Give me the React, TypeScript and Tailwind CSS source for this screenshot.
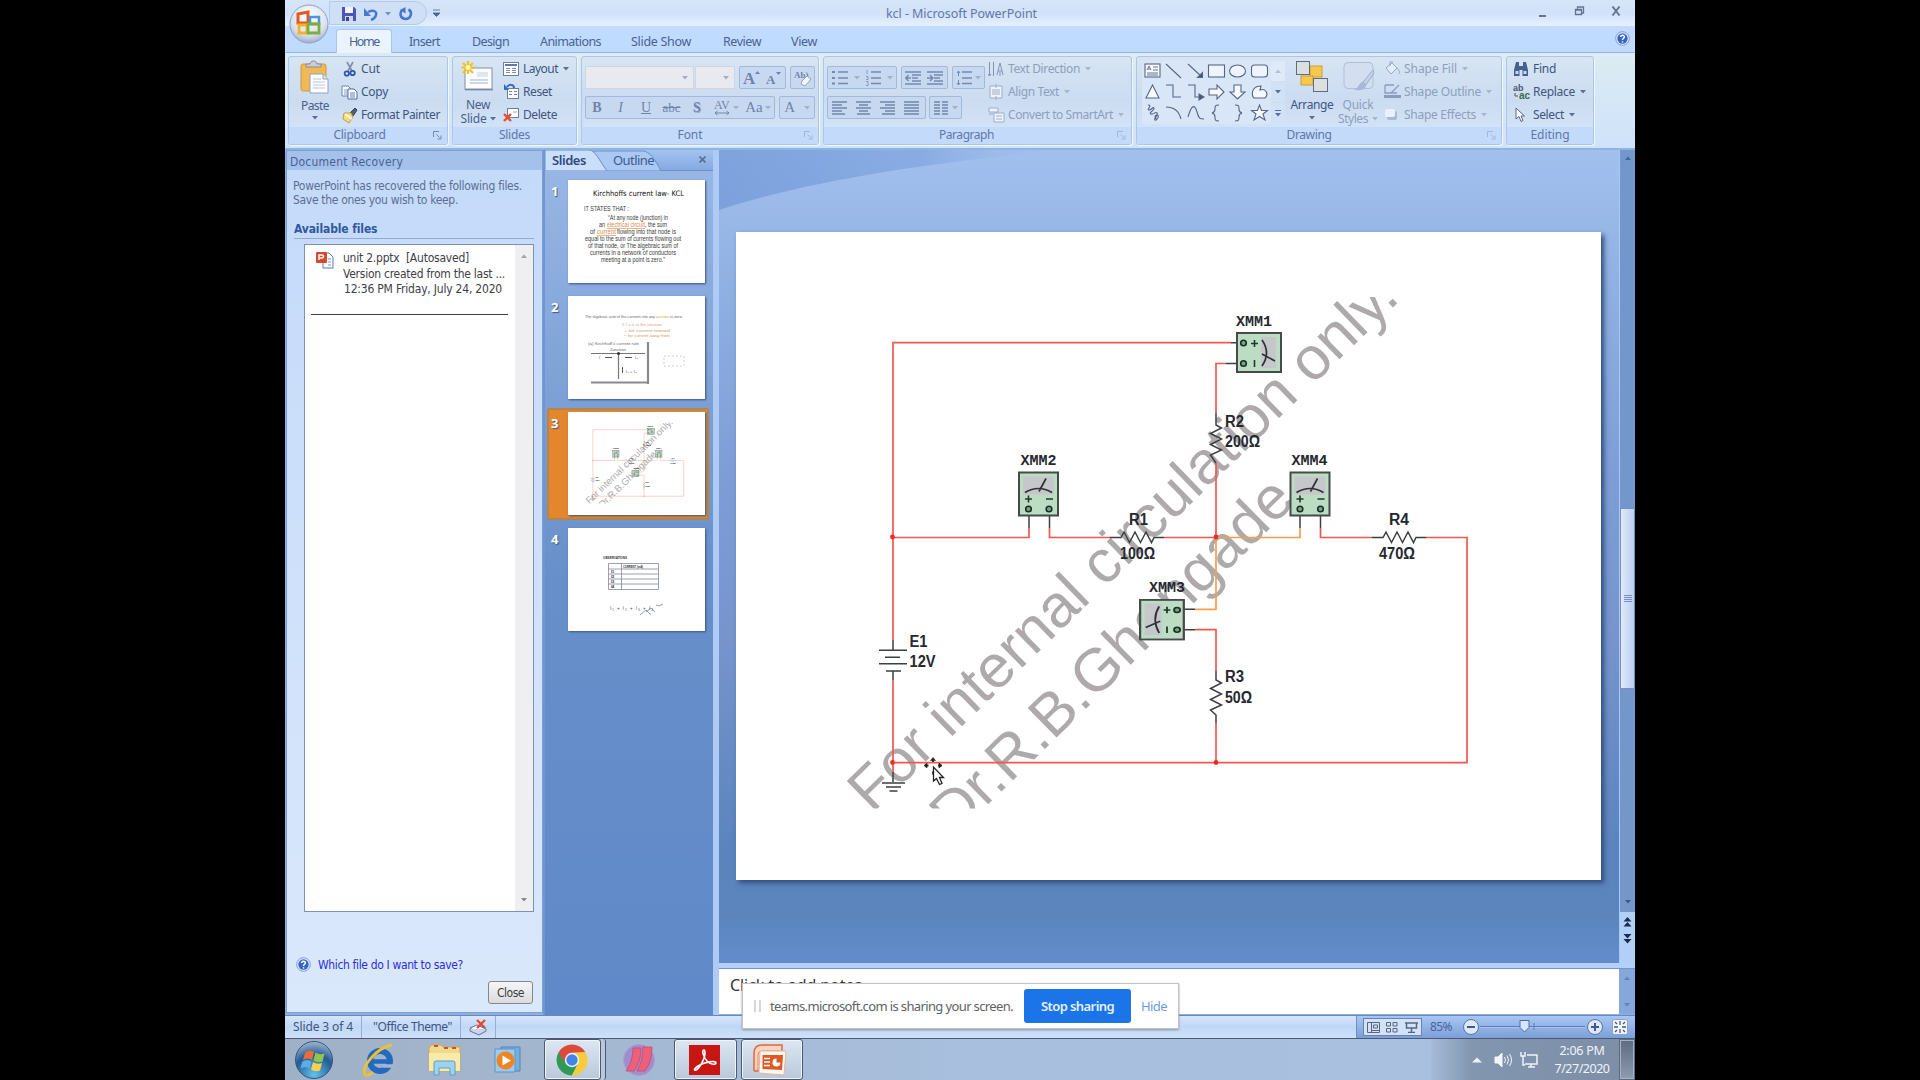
import React, { useLayoutEffect, useRef } from "react";

const UI = "font-['Noto_Sans','Open_Sans',sans-serif]";
const TAHOMA = "font-['DejaVu_Sans_Condensed','DejaVu_Sans',sans-serif]";

/** Single-line label whose tracking is computed so that it fills a given width. */
function Label({ w, className = "", children }: { w: number; className?: string; children: string }) {
  const ref = useRef<HTMLSpanElement>(null);
  useLayoutEffect(() => {
    const el = ref.current;
    if (!el) return;
    el.style.letterSpacing = "0px";
    const natural = el.getBoundingClientRect().width;
    el.style.letterSpacing = `${(w - natural) / children.length}px`;
  }, [w, children]);
  return (
    <span ref={ref} className={`inline-block w-fit shrink-0 whitespace-pre leading-[14px] ${className}`}>
      {children}
    </span>
  );
}

function Caret({ className = "text-[#5a6f96]" }: { className?: string }) {
  return (
    <svg width="6" height="4" viewBox="0 0 6 4" className={`shrink-0 ${className}`}>
      <path d="M0 0h6L3 3.6z" fill="currentColor" />
    </svg>
  );
}

function Launcher({ faded = false }: { faded?: boolean }) {
  return (
    <svg width="9" height="9" viewBox="0 0 9 9" className={faded ? "text-[#a3b6d3]" : "text-[#7488ad]"} fill="none" stroke="currentColor">
      <path d="M.5 6V.5H6M3.5 3.5l3 3M8 4.5V8H4.5" />
    </svg>
  );
}

function Group({ width, label, labelW, pad = "pr-0", launcher, faded, children }: { width: string; label: string; labelW: number; pad?: string; launcher?: boolean; faded?: boolean; children: React.ReactNode }) {
  return (
    <section className={`${width} flex h-[89px] shrink-0 flex-col overflow-hidden rounded-[3px] border border-[#adc5e6] bg-gradient-to-b from-[#d7e5f3] via-[#cbdcf1] to-[#d6e7fb] shadow-[1px_1px_0_#eef6ff]`}>
      <div className="flex h-[70px] shrink-0">{children}</div>
      <div className="relative flex h-[17px] items-center justify-center bg-[#c3dafb]">
        <div className={`flex pb-[2px] ${pad}`}>
          <Label w={labelW} className="text-[12px] text-[#5f78a8]">{label}</Label>
        </div>
        {launcher && (
          <div className="absolute right-[5px] top-[4px]">
            <Launcher faded={faded} />
          </div>
        )}
      </div>
    </section>
  );
}

function Row({ icon, text, w, caret, off }: { icon: React.ReactNode; text: string; w: number; caret?: boolean; off?: boolean }) {
  return (
    <div className="flex h-[23px] items-center">
      <div className="flex w-[20px] shrink-0 items-center">{icon}</div>
      <Label w={w} className={off ? "text-[12px] text-[#8c9fbd]" : "text-[12px] text-[#40557f]"}>{text}</Label>
      {caret && <div className="ml-[5px]"><Caret className={off ? "text-[#a5b6d0]" : "text-[#5a6f96]"} /></div>}
    </div>
  );
}

/* ---------- ribbon icons ---------- */
const PasteIcon = () => (
  <svg width="30" height="34" viewBox="0 0 30 34">
    <rect x="1" y="4" width="25" height="27" rx="2" fill="#efba55" stroke="#cf9a3f" />
    <path d="M6 7V4h4c0-4 7-4 7 0h4v3z" fill="#c9ced6" stroke="#858c98" />
    <path d="M10 14h13l5 5v14H10z" fill="#fff" stroke="#8ea0c4" />
    <path d="M13 19h8M13 22h12M13 25h12M13 28h12" stroke="#b4c3de" />
    <path d="M23 14v5h5" fill="#dbe5f4" stroke="#8ea0c4" />
  </svg>
);
const CutIcon = () => (
  <svg width="18" height="16" viewBox="0 0 18 16" fill="none">
    <path d="M6 1l5 9M12 1L7 10" stroke="#7c8cab" strokeWidth="1.6" />
    <circle cx="5.8" cy="12.5" r="2.2" stroke="#2f57b0" strokeWidth="1.8" />
    <circle cx="11.6" cy="12" r="2.2" stroke="#2f57b0" strokeWidth="1.8" />
  </svg>
);
const CopyIcon = () => (
  <svg width="18" height="16" viewBox="0 0 18 16">
    <path d="M1 2h6l3 3v7H1z" fill="#f4f8ff" stroke="#6d84b5" />
    <path d="M3 6h5M3 8h5M3 10h5" stroke="#8ba2ce" />
    <path d="M7 5h6l3 3v7H7z" fill="#fff" stroke="#4c6bab" />
    <path d="M9 9h5M9 11h5M9 13h5" stroke="#5a7bc0" />
  </svg>
);
const PainterIcon = () => (
  <svg width="18" height="18" viewBox="0 0 18 18">
    <path d="M9 7l5-5 2 2-4 6z" fill="#55617a" stroke="#323e58" />
    <path d="M3 7l7 0 2 4-4 6-6-4z" fill="#f2d98a" stroke="#c79c3f" />
    <path d="M4 8l7 5" stroke="#fff8d8" strokeWidth="2" />
  </svg>
);
const NewSlideIcon = () => (
  <svg width="34" height="32" viewBox="0 0 34 32">
    <rect x="4" y="7" width="27" height="21" fill="#fdfdff" stroke="#8290ac" />
    <rect x="16" y="11" width="11" height="5" fill="#dfe7f4" />
    <path d="M9 19h18M9 22h18" stroke="#bac9e2" strokeWidth="1.5" />
    <path d="M4 28.800h28" stroke="#66758f" />
    <path d="M7 0v13M.5 6.500h13M2 2l10 10M12 2L2 12" stroke="#f1c21f" strokeWidth="2.200" />
    <circle cx="7" cy="6.500" r="2.500" fill="#fff6b5" />
  </svg>
);
const LayoutIcon = () => (
  <svg width="16" height="14" viewBox="0 0 16 14">
    <rect x=".5" y=".5" width="15" height="13" fill="#fff" stroke="#6b7fa6" />
    <path d="M2 3h12" stroke="#5c78b0" strokeWidth="2" />
    <path d="M3 6.500h4M3 8.500h4M3 10.500h4M9 6.500h4M9 8.500h4M9 10.500h4" stroke="#7e8ba5" />
  </svg>
);
const ResetIcon = () => (
  <svg width="17" height="17" viewBox="0 0 17 17">
    <rect x="4.500" y="5.500" width="11" height="10" fill="#fff" stroke="#6b7fa6" />
    <path d="M6 8.500h3M6 11.500h3M11 8.500h3M11 11.500h3" stroke="#6f81a3" />
    <path d="M11 5c0-4-5-4-7-1" fill="none" stroke="#3766c4" strokeWidth="2" />
    <path d="M1 1v6h5z" fill="#3766c4" />
  </svg>
);
const DeleteIcon = () => (
  <svg width="17" height="15" viewBox="0 0 17 15">
    <rect x="4.500" y="1.500" width="11" height="9" fill="#fff" stroke="#6b7fa6" />
    <path d="M10 5h4" stroke="#93a5c8" />
    <path d="M1 7l7 7M8 7l-7 7" stroke="#e2502c" strokeWidth="2.300" />
  </svg>
);

const BOX = "flex h-[23px] shrink-0 items-center rounded-[2px] border border-[#a3b9db] bg-[#c7d9f1]";

function Bars({ kind }: { kind: "l" | "c" | "r" | "j" | "cols" }) {
  const d = {
    l: "M0 1h15M0 4h10M0 7h15M0 10h10M0 13h13",
    c: "M0 1h15M3 4h9M0 7h15M3 10h9M1 13h13",
    r: "M0 1h15M5 4h10M0 7h15M5 10h10M2 13h13",
    j: "M0 1h15M0 4h15M0 7h15M0 10h15M0 13h15",
    cols: "M0 1h6M0 4h6M0 7h6M0 10h6M0 13h6M8 1h6M8 4h6M8 7h6M8 10h6M8 13h6",
  }[kind];
  return (
    <svg width="15" height="14" viewBox="0 0 15 14" className="shrink-0">
      <path d={d} stroke="#7286ab" strokeWidth="1.5" />
    </svg>
  );
}

function ListGlyph({ kind }: { kind: "dots" | "nums" | "out" | "in" | "space" }) {
  return (
    <svg width="17" height="16" viewBox="0 0 17 16" className="shrink-0" fill="none" stroke="#7589ae">
      {kind === "dots" && <path d="M0 2h3M0 8h3M0 13.500h3" strokeWidth="2" />}
      {kind === "nums" && <path d="M2 0v4M1 6.500h2v3H1M1 11.500h2v4H1" strokeWidth=".8" />}
      {kind === "space" && <path d="M2.500 1v5M1 3l1.500-2L4 3M2.500 10v5M1 13l1.500 2L4 13" />}
      {(kind === "dots" || kind === "nums" || kind === "space") && <path d="M6 2h10M6 8h10M6 13.500h10" strokeWidth="1.400" />}
      {(kind === "out" || kind === "in") && <path d="M0 2h16M7 5h9M7 8h6M7 11h9M0 14h16" strokeWidth="1.600" />}
      {kind === "out" && <path d="M6 8H1M3.500 5L.7 8l2.800 3" strokeWidth="1.500" />}
      {kind === "in" && <path d="M0 8h5M3 5l2.800 3L3 11" strokeWidth="1.500" />}
    </svg>
  );
}

const galleryShapes = [
  <g key="a"><rect x="2" y="3" width="15" height="13" fill="#f5f8fd" /><path d="M4 9l2-4 2 4M5 8h2M10 6h5M10 9h5M4 12h11M4 14h11" strokeWidth=".9" /></g>,
  <path key="b" d="M2 3l15 14" />,
  <g key="c"><path d="M2 3l14 13" /><path d="M16.500 11.500v5h-5z" fill="#465672" /></g>,
  <rect key="d" x="1.500" y="4" width="16" height="12" fill="#eef4fc" />,
  <ellipse key="e" cx="9.500" cy="10" rx="8" ry="6" fill="#eef4fc" />,
  <rect key="f" x="1.500" y="4" width="16" height="12" rx="3" fill="#eef4fc" />,
  <path key="g" d="M9.500 3L16 16H3z" fill="#f5f8fd" />,
  <path key="h" d="M2 3h7v12h8" />,
  <g key="i"><path d="M2 3h7v12h6" /><path d="M13 12l5 3-5 3z" fill="#465672" /></g>,
  <path key="j" d="M2 7h8V3l7 7-7 7v-4H2z" fill="#f5f8fd" />,
  <path key="k" d="M6 3h7v7h4l-7.500 7L2 10h4z" fill="#f5f8fd" />,
  <path key="l" d="M3 15c-2-6 1-11 8-11l-1 4c6-2 9 4 5 8H4z" fill="#f5f8fd" />,
  <path key="m" d="M5 2c5 0-2 5 1 5s4-4 5-2-6 5-3 6 4-3 6-1-4 6-2 7 5-5 2-5-2 4 0 4" />,
  <path key="n" d="M2 4c8 0 13 4 15 12" />,
  <path key="o" d="M2 14C6 0 9 2 11 9s3 7 7 7" />,
  <path key="p" d="M12 2c-4 0-4 1-4 4s-1 3.500-3 4c2 .5 3 1 3 4s0 4 4 4" />,
  <path key="q" d="M7 2c4 0 4 1 4 4s1 3.500 3 4c-2 .5-3 1-3 4s0 4-4 4" />,
  <path key="r" d="M9.500 2l2 5.500h6L13 11l2 6-5.500-3.500L4 17l2-6-4.500-3.500h6z" fill="#f5f8fd" />,
];

function Ribbon() {
  return (
    <div className="flex h-[96px] gap-[4px] border-t border-[#93b0ee] bg-gradient-to-b from-[#dcecf2] to-[#cfe2fb] pl-[3px] pt-[3px]">
      <Group width="w-[160px]" label="Clipboard" labelW={52} pad="pr-[17px]" launcher>
        <div className="ml-[9px] flex w-[34px] flex-col items-center pt-[3px]">
          <PasteIcon />
          <Label w={28} className="mt-[5px] text-[12px] text-[#4a5f8c]">Paste</Label>
          <div className="mt-[3px]"><Caret /></div>
        </div>
        <div className="ml-[9px] flex flex-col">
          <Row icon={<CutIcon />} text="Cut" w={19} />
          <Row icon={<CopyIcon />} text="Copy" w={27} />
          <Row icon={<PainterIcon />} text="Format Painter" w={79} />
        </div>
      </Group>
      <Group width="w-[125px]" label="Slides" labelW={31}>
        <div className="ml-[5px] flex w-[40px] flex-col items-center pt-[4px]">
          <NewSlideIcon />
          <Label w={24} className="mt-[5px] text-[12px] text-[#4a5f8c]">New</Label>
          <div className="flex items-center gap-[3px]">
            <Label w={26} className="text-[12px] text-[#4a5f8c]">Slide</Label>
            <Caret />
          </div>
        </div>
        <div className="ml-[5px] flex flex-col">
          <Row icon={<LayoutIcon />} text="Layout" w={35} caret />
          <Row icon={<ResetIcon />} text="Reset" w={29} />
          <Row icon={<DeleteIcon />} text="Delete" w={34} />
        </div>
      </Group>
      <Group width="w-[238px]" label="Font" labelW={25} pad="pr-[20px]" launcher faded>
        <div className="ml-[3px] flex flex-col gap-[7px] pt-[9px] font-['Liberation_Serif',serif] text-[#7084a9]">
          <div className="flex">
            <div className="flex h-[23px] w-[109px] items-center justify-end border border-[#cfd6e4] bg-[#e9e9f0] pr-[5px]"><Caret className="text-[#a3aec1]" /></div>
            <div className="ml-[1px] flex h-[23px] w-[40px] items-center justify-end border border-[#cfd6e4] bg-[#e9e9f0] pr-[5px]"><Caret className="text-[#a3aec1]" /></div>
            <div className={`${BOX} ml-[4px] w-[47px] justify-around`}>
              <svg width="18" height="16" viewBox="0 0 18 16" fill="#7084a9"><text x="0" y="14" fontSize="17" fontFamily="Liberation Serif, serif" fontWeight="bold">A</text><path d="M12 4l2.500-3L17 4z" /></svg>
              <svg width="16" height="16" viewBox="0 0 16 16" fill="#7084a9"><text x="0" y="14" fontSize="13" fontFamily="Liberation Serif, serif" fontWeight="bold">A</text><path d="M10 2l2.500 3L15 2z" /></svg>
            </div>
            <div className={`${BOX} ml-[4px] w-[25px] justify-center`}>
              <svg width="19" height="18" viewBox="0 0 19 18">
                <text x="1" y="9" fontSize="9" fontFamily="Liberation Serif, serif" fontWeight="bold" fill="#7084a9">Ab)</text>
                <path d="M9 12l5-5 4 3-6 7-4-2z" fill="#f3f6fb" stroke="#90a2c2" />
              </svg>
            </div>
          </div>
          <div className="flex">
            <div className={`${BOX} w-[190px] text-[14px] leading-none`}>
              <b className="w-[22px] text-center">B</b>
              <i className="w-[25px] text-center">I</i>
              <span className="w-[26px] text-center underline">U</span>
              <span className="w-[25px] text-center text-[13px] line-through">abc</span>
              <b className="w-[26px] text-center drop-shadow-[1px_1px_0_#9aabc8]">S</b>
              <span className="flex w-[32px] items-center justify-center gap-[2px]">
                <svg width="17" height="16" viewBox="0 0 17 16" fill="none"><text x="0" y="9" fontSize="12" fontFamily="Liberation Serif, serif" fill="#7084a9">AV</text><path d="M1 13h14M3.500 11L1 13l2.500 2M12.500 11l2.500 2-2.500 2" stroke="#7084a9" /></svg>
                <Caret className="text-[#a0b1cd]" />
              </span>
              <span className="flex w-[32px] items-center justify-center gap-[2px] text-[15px]">Aa<Caret className="text-[#a0b1cd]" /></span>
            </div>
            <div className={`${BOX} ml-[4px] w-[36px] justify-around text-[15px]`}>A<Caret className="text-[#a0b1cd]" /></div>
          </div>
        </div>
      </Group>
      <Group width="w-[309px]" label="Paragraph" labelW={55} pad="pr-[22px]" launcher faded>
        <div className="ml-[3px] flex w-[158px] flex-col gap-[7px] pt-[9px]">
          <div className="flex gap-[4px]">
            <div className={`${BOX} w-[70px] gap-[5px] pl-[4px]`}>
              <ListGlyph kind="dots" /><Caret className="text-[#a0b1cd]" />
              <ListGlyph kind="nums" /><Caret className="text-[#a0b1cd]" />
            </div>
            <div className={`${BOX} w-[47px] justify-around`}><ListGlyph kind="out" /><ListGlyph kind="in" /></div>
            <div className={`${BOX} w-[33px] justify-center gap-[2px]`}><ListGlyph kind="space" /><Caret className="text-[#a0b1cd]" /></div>
          </div>
          <div className="flex gap-[3px]">
            <div className={`${BOX} w-[99px] gap-[9px] pl-[4px]`}><Bars kind="l" /><Bars kind="c" /><Bars kind="r" /><Bars kind="j" /></div>
            <div className={`${BOX} w-[33px] gap-[3px] pl-[4px]`}><Bars kind="cols" /><Caret className="text-[#a0b1cd]" /></div>
          </div>
        </div>
        <div className="ml-[3px] flex flex-col">
          <Row off caret w={72} text="Text Direction" icon={<svg width="16" height="16" viewBox="0 0 16 16" stroke="#8093b3" fill="none"><path d="M1.500 1v14M5.500 1v14M0 13l1.500 2L3 13M9 14l3-12 3 12M10 10h4M12 15v-4" /></svg>} />
          <Row off caret w={51} text="Align Text" icon={<svg width="16" height="16" viewBox="0 0 16 16" stroke="#9badc9" fill="#eff4fb"><path d="M2 2h12v12H2z" /><path d="M4 6h8M4 8h8M4 10h8M8 0v4M8 12v4" /></svg>} />
          <Row off caret w={105} text="Convert to SmartArt" icon={<svg width="17" height="16" viewBox="0 0 17 16" stroke="#9badc9" fill="#eff4fb"><path d="M1 1h9v4H1zM6 6h10v9H6zM1 7h4" /><path d="M8 9h6M8 12h6" /></svg>} />
        </div>
      </Group>
      <Group width="w-[366px]" label="Drawing" labelW={45} pad="pr-[20px]" launcher faded>
        <div className="ml-[5px] mt-[4px] grid h-[63px] w-[129px] grid-cols-6 grid-rows-3 bg-[#d8e6f8] pl-[1px]">
          {galleryShapes.map((shape, i) => (
            <svg key={i} width="20" height="20" viewBox="0 0 20 20" fill="none" stroke="#566785" strokeWidth="1.100">{shape}</svg>
          ))}
        </div>
        <div className="mt-[4px] flex h-[63px] w-[14px] flex-col gap-px">
          <div className="flex h-[20px] items-center justify-center bg-[#dfeaf8]"><Caret className="rotate-180 text-[#b3c1d7]" /></div>
          <div className="flex h-[20px] items-center justify-center bg-[#d1e1f6]"><Caret /></div>
          <div className="flex h-[21px] flex-col items-center justify-center gap-[2px] bg-[#d1e1f6]"><div className="h-px w-[6px] bg-[#5a6f96]" /><Caret /></div>
        </div>
        <div className="ml-[5px] flex w-[44px] flex-col items-center pt-[3px]">
          <svg width="34" height="33" viewBox="0 0 34 33">
            <rect x="15" y="6" width="12" height="11" fill="#f6c84b" stroke="#cf9d33" />
            <rect x="6" y="16" width="12" height="9" fill="#f6c84b" stroke="#cf9d33" />
            <rect x="1.500" y="1.500" width="13" height="13" fill="#dcdfe0" stroke="#5f6d80" />
            <rect x="18.500" y="18.500" width="14" height="13" fill="#dcdfe0" stroke="#5f6d80" />
          </svg>
          <Label w={43} className="mt-[5px] text-[12px] text-[#40557f]">Arrange</Label>
          <div className="mt-[4px]"><Caret /></div>
        </div>
        <div className="ml-[4px] flex w-[40px] flex-col items-center pt-[4px]">
          <svg width="34" height="32" viewBox="0 0 34 32">
            <rect x="3" y="1.500" width="29" height="26" rx="4" fill="#d3dff0" stroke="#aebfd9" />
            <path d="M32 9L22 21l3 3L33 12z" fill="#c3d0e5" stroke="#9cafcd" />
            <path d="M22 21c-4 0-4 6-9 8 6 1 12 0 12-5z" fill="#a8b9d4" />
          </svg>
          <Label w={31} className="mt-[5px] text-[12px] text-[#8c9fbd]">Quick</Label>
          <div className="flex items-center gap-[4px]">
            <Label w={30} className="text-[12px] text-[#8c9fbd]">Styles</Label>
            <Caret className="text-[#a5b6d0]" />
          </div>
        </div>
        <div className="ml-[6px] flex flex-col">
          <Row off caret w={53} text="Shape Fill" icon={<svg width="17" height="15" viewBox="0 0 17 15" fill="#e6eef9" stroke="#95a7c4"><path d="M2 7l6-5 5 5-6 6zM6 5V1h3M13 7c2 2 3 4 2 6" /></svg>} />
          <Row off caret w={77} text="Shape Outline" icon={<svg width="17" height="15" viewBox="0 0 17 15" fill="none" stroke="#8b9dbb"><path d="M1 1h9M1 1v8h12M15 1L7 9" strokeWidth="1.300" /><path d="M0 12.500h17" strokeWidth="3" /></svg>} />
          <Row off caret w={72} text="Shape Effects" icon={<svg width="17" height="15" viewBox="0 0 17 15"><rect x="3" y="4" width="10" height="9" rx="2" fill="#a9bad6" /><rect x="1" y="2" width="10" height="8" rx="2" fill="#e9f1fc" /></svg>} />
        </div>
      </Group>
      <Group width="w-[88px]" label="Editing" labelW={39}>
        <div className="ml-[6px] flex flex-col">
          <Row w={23} text="Find" icon={<svg width="16" height="14" viewBox="0 0 16 14" fill="#44618f"><path d="M3 0h3v4h4V0h3l2 8v6H9.500V8h-3v6H1V8z" /><path d="M2.500 9h3v3h-3zM10.500 9h3v3h-3z" fill="#c9d9f0" /></svg>} />
          <Row w={42} text="Replace" caret icon={<svg width="18" height="16" viewBox="0 0 18 16"><text x="0" y="7" fontSize="9" fontWeight="bold" fontFamily="Liberation Sans, sans-serif" fill="#4a5671">ab</text><text x="6" y="15" fontSize="10" fontWeight="bold" fontFamily="Liberation Sans, sans-serif" fill="#3f6b4d">ac</text><path d="M2 9v3h3" fill="none" stroke="#4a5671" /></svg>} />
          <Row w={31} text="Select" caret icon={<svg width="14" height="15" viewBox="0 0 14 15"><path d="M3 1v11l3-2.500 2 5 2-1-2-4.500h3.500z" fill="#fff" stroke="#54658a" /></svg>} />
        </div>
      </Group>
    </div>
  );
}

function HelpIcon({ size }: { size: number }) {
  return (
    <svg width={size} height={size} viewBox="0 0 16 16" className="shrink-0">
      <circle cx="8" cy="8" r="7.300" fill="#dbe7fa" stroke="#7f9bd0" />
      <circle cx="8" cy="8" r="5.500" fill="#3565c6" />
      <path d="M6 6.500c0-3 4.300-2.500 4 0-.2 1.300-2 1.300-2 3M8 11v1.200" stroke="#fff" strokeWidth="1.600" fill="none" />
    </svg>
  );
}

function TitleArea() {
  const tabs: [string, number, string][] = [
    ["Insert", 31, "w-[65px]"],
    ["Design", 37, "w-[67px]"],
    ["Animations", 61, "w-[93px]"],
    ["Slide Show", 60, "w-[88px]"],
    ["Review", 38, "w-[74px]"],
    ["View", 26, "w-[50px]"],
  ];
  return (
    <header className="relative h-[52px] shrink-0">
      <div className="flex h-[26px] items-center bg-gradient-to-b from-[#d6e5f9] via-[#d0e2f9] to-[#e6f0fe]">
        <div className="ml-[44px] flex h-[24px] w-[98px] items-center rounded-r-[12px] border border-[#b4cbeb] bg-[#cfdff5] pl-[12px] pt-[2px]">
          <svg width="14" height="14" viewBox="0 0 14 14"><path d="M0 0h12l2 2v12H0z" fill="#4f55b8" /><path d="M3 0h8v6H3z" fill="#f1f4fb" /><path d="M3 9h8v5H3z" fill="#cdd6ea" /><path d="M4 10h3v4H4z" fill="#3c4390" /></svg>
          <svg width="15" height="14" viewBox="0 0 15 14" className="ml-[8px]"><path d="M4 5c6-3 9 0 8 3-.5 2-2 4-5 5" fill="none" stroke="#4777d0" strokeWidth="2.500" /><path d="M0 1v8h7z" fill="#4777d0" /></svg>
          <div className="ml-[6px]"><Caret className="text-[#7a90ba]" /></div>
          <svg width="14" height="14" viewBox="0 0 14 14" className="ml-[8px]"><path d="M9.500 2.500c4 2 3 9-2.500 9.500C1 12 .5 6 3 3" fill="none" stroke="#4777d0" strokeWidth="2.600" /><path d="M6.500 0v6.500L1 3z" fill="#4777d0" /></svg>
        </div>
        <svg width="7" height="8" viewBox="0 0 7 8" className="ml-[6px]"><path d="M0 1h7M0 4h7L3.500 7.500z" stroke="#4f648e" fill="#4f648e" strokeWidth=".8" /></svg>
        <div className="ml-[446px] flex pt-[2px]"><Label w={151} className="text-[12.500px] text-[#6377a6]">kcl - Microsoft PowerPoint</Label></div>
        <div className="flex-1" />
        <svg width="86" height="14" viewBox="0 0 86 14" className="mb-[4px] mr-[12px]" fill="none" stroke="#62748f">
          <path d="M2 12h7" strokeWidth="2" />
          <path d="M38.500 5.500h6v5h-6zM40.500 4.500V3h6v6h-2M38 6h7" strokeWidth="1.300" />
          <path d="M75.500 2.500l7 9M82.500 2.500l-7 9" strokeWidth="2" />
        </svg>
      </div>
      <nav className="flex h-[26px] bg-[#bfdbff] pl-[51px] pt-[3px]">
        <div className="flex h-[24px] w-[56px] items-center justify-center rounded-t-[3px] border border-b-0 border-[#a9c6f0] bg-[#ebf4fd] pt-[1px]">
          <Label w={30} className="text-[12.500px] text-[#4b6294]">Home</Label>
        </div>
        {tabs.map(([name, w, cell]) => (
          <div key={name} className={`${cell} flex h-[24px] items-center justify-center pt-[1px]`}>
            <Label w={w} className="text-[12.500px] text-[#4b6294]">{name}</Label>
          </div>
        ))}
        <div className="flex-1" />
        <div className="mr-[5px] mt-[2px]"><HelpIcon size={15} /></div>
      </nav>
      <svg width="42" height="42" viewBox="0 0 42 42" className="absolute left-[3px] top-[3px]">
        <defs>
          <radialGradient id="orb" cx=".5" cy=".3" r=".7"><stop offset="0" stopColor="#fff" /><stop offset=".7" stopColor="#d9e1ee" /><stop offset="1" stopColor="#9fb0cc" /></radialGradient>
        </defs>
        <circle cx="21" cy="21" r="19" fill="url(#orb)" stroke="#8ea0c0" />
        <path d="M10 11l10-2v11H10z" fill="none" stroke="#e2581e" strokeWidth="3" />
        <path d="M22 14h9v7h-9z" fill="none" stroke="#4d94d8" strokeWidth="2.500" />
        <path d="M11 22h8v8h-8z" fill="none" stroke="#f2b32a" strokeWidth="2.800" />
        <path d="M20 21h11v9H20z" fill="none" stroke="#7cae3b" strokeWidth="2.800" />
      </svg>
    </header>
  );
}

/* ---------- document recovery ---------- */
function RecoveryPane() {
  return (
    <aside className={`ml-[1px] flex h-[863px] w-[257px] shrink-0 flex-col border border-[#7f9fd0] bg-gradient-to-b from-[#c4dafa] to-[#dae8fb] ${TAHOMA}`}>
      <div className="flex h-[19px] shrink-0 items-center bg-[#a4c1ec] pl-[3px] pt-[2px]"><Label w={113} className="text-[12px] text-[#4a6190]">Document Recovery</Label></div>
      <div className="flex flex-col pl-[6px] pt-[9px] text-[12px] text-[#5c6f93]">
        <Label w={229}>PowerPoint has recovered the following files.</Label>
        <Label w={165}>Save the ones you wish to keep.</Label>
      </div>
      <div className="ml-[7px] mt-[15px] flex h-[17px] w-[240px] shrink-0 items-start border-b border-[#93abce]"><Label w={83} className="text-[12px] font-bold text-[#31589c]">Available files</Label></div>
      <div className="ml-[17px] mt-[5px] flex h-[668px] w-[230px] shrink-0 border border-[#8090b0] bg-white">
        <div className="flex flex-1 flex-col pl-[6px] pt-[6px] text-[12px] text-[#3e4046]">
          <div className="flex">
            <svg width="19" height="18" viewBox="0 0 19 18" className="ml-[4px] shrink-0">
              <path d="M8 2h6l4 4v11H8z" fill="#fff" stroke="#5d79b8" /><path d="M13 8h3M13 11h3M13 14h3" stroke="#7991c5" />
              <rect x="1" y="1" width="11" height="11" rx="1" fill="#d9472c" /><path d="M4 9V4h3a1.500 1.500 0 010 3H4" stroke="#fff" strokeWidth="1.500" fill="none" />
            </svg>
            <div className="ml-[9px] flex flex-col gap-[1.600px]">
              <Label w={126}>unit 2.pptx  [Autosaved]</Label>
              <Label w={162}>Version created from the last ...</Label>
              <Label w={158} className="ml-[1px]">12:36 PM Friday, July 24, 2020</Label>
            </div>
          </div>
          <div className="mt-[18px] h-px w-[197px] bg-[#44413c]" />
        </div>
        <div className="flex w-[18px] flex-col items-center justify-between bg-[#efeff1] py-[9px]">
          <Caret className="rotate-180 text-[#a2a4a8]" /><Caret className="text-[#858789]" />
        </div>
      </div>
      <div className="ml-[9px] mt-[45px] flex items-center gap-[7px]">
        <HelpIcon size={15} />
        <Label w={145} className="text-[12px] text-[#2b2fe0]">Which file do I want to save?</Label>
      </div>
      <div className="ml-[201px] mt-[9px] flex h-[23px] w-[45px] items-center justify-center rounded-[3px] border border-[#84878c] bg-gradient-to-b from-[#f6f6f6] to-[#dbdbdf]">
        <Label w={27} className="text-[12px] text-[#3c3f45]">Close</Label>
      </div>
    </aside>
  );
}

/* ---------- circuit ---------- */
function MeterFace() {
  return (
    <>
      <rect x="1" y="1" width="39" height="43" fill="#bcdcc3" stroke="#454b4b" strokeWidth="2" />
      <rect x="5" y="5" width="31" height="18" fill="#c5c7cb" />
      <path d="M7 21q13.500-8 27 0M21 20l7-13" fill="none" stroke="#2c3433" strokeWidth="1.700" />
      <path d="M7 27.500h7M10.500 24v7M28 27.500h7" stroke="#1f3a2a" strokeWidth="1.600" />
      <circle cx="10.500" cy="37.500" r="2.800" fill="#7fa189" stroke="#183221" strokeWidth="1.600" />
      <circle cx="31" cy="37.500" r="2.800" fill="#7fa189" stroke="#183221" strokeWidth="1.600" />
    </>
  );
}

function MeterSide() {
  return (
    <>
      <rect x="1" y="1" width="44" height="39" fill="#bcdcc3" stroke="#454b4b" strokeWidth="2" />
      <rect x="25" y="5" width="15" height="31" fill="#c5c7cb" />
      <path d="M26 8q9 13 0 26M26 22l13 7" fill="none" stroke="#2c3433" strokeWidth="1.700" />
      <path d="M15 11.500h7M18.500 8v7M18.500 28v7" stroke="#1f3a2a" strokeWidth="1.600" />
      <circle cx="7.500" cy="11" r="2.800" fill="#7fa189" stroke="#183221" strokeWidth="1.600" />
      <circle cx="7.500" cy="31.500" r="2.800" fill="#7fa189" stroke="#183221" strokeWidth="1.600" />
    </>
  );
}

function Txt({ x, y, w, mono, children }: { x: number; y: number; w: number; mono?: boolean; children: string }) {
  return (
    <text x={x} y={y} textLength={w} lengthAdjust="spacingAndGlyphs" fontSize={mono ? 14 : 16} fontWeight="bold" fontFamily={mono ? "Liberation Mono, monospace" : "Liberation Sans, sans-serif"} fill="#262830">
      {children}
    </text>
  );
}

function Circuit({ width, height, thin }: { width: number; height: number; thin?: boolean }) {
  const clip = thin ? "clip-small" : "clip-main";
  return (
    <svg width={width} height={height} viewBox="736 232 865 648" className="block">
      <defs><clipPath id={clip}><rect x="830" y="297" width="600" height="511.500" /></clipPath></defs>
      <g clipPath={`url(#${clip})`} fill="#aeaaac" fontFamily="Liberation Sans, sans-serif" fontSize="60">
        <text transform="translate(872 814) rotate(-44.200)" textLength="738" lengthAdjust="spacingAndGlyphs">For internal circulation only.</text>
        <text transform="translate(954 838) rotate(-44.400)" textLength="480" lengthAdjust="spacingAndGlyphs">Dr.R.B.Ghongade</text>
      </g>
      <g fill="none" stroke="#f4564e" strokeWidth="1.700">
        <path d="M1231 342.700H893V640M893 680V772M893 537.500H1029V528M1049.500 528V537.500H1110M1164 537.500H1216M1226 363.500H1216V413M1216 463V537.500M1320.500 528V537.500H1372M1426 537.500H1467V762.700H893M1195 629.700H1216V671M1216 723V762.700" />
        <path d="M1216 537.500H1300V528M1216 537.500V609.300H1195" stroke="#f5a04a" />
      </g>
      <g fill="none" stroke="#3c4042" strokeWidth="1.500">
        <path d="M1231 342.700h12M1226 363.500h17M1029 516v12M1049.500 516v12M1300 516v12M1320.500 516v12M1184 609.300h11M1184 629.700h11" />
        <path d="M1216 413V425l5.500 3-11 5.500 11 5.500-11 5.500 11 5.500-11 5L1216 463" />
        <path d="M1216 671V680l5.500 3-11 5.500 11 5.500-11 5.500 11 5.500-11 5L1216 715V723" />
        <path d="M1110 537.500H1121l3-5.500 5.500 10.500 5.500-10.500 5.500 10.500 5.500-10.500 5.500 10.500 2.500-5H1164" />
        <path d="M1372 537.500H1383l3-5.500 5.500 10.500 5.500-10.500 5.500 10.500 5.500-10.500 5.500 10.500 2.500-5H1426" />
        <path d="M893 640v10M879 650.300h28M885 657.200h15M879 663.700h28M886 671h15M893 671v9M893 772v10M882 783h23M886 787h15M889.500 791h8" />
      </g>
      <g fill="#ef2b26"><circle cx="892.500" cy="537" r="2.400" /><circle cx="1216" cy="537" r="2.400" /><circle cx="1216" cy="762.500" r="2.400" /><circle cx="892.500" cy="762.500" r="2.400" /></g>
      <g transform="translate(1018 471.500)"><MeterFace /></g>
      <g transform="translate(1289.500 471.500)"><MeterFace /></g>
      <g transform="translate(1236 332)"><MeterSide /></g>
      <g transform="translate(1139 599) scale(1.120 .92)">
        <rect x="1" y="1" width="39" height="43" fill="#bcdcc3" stroke="#454b4b" strokeWidth="2" />
        <rect x="5" y="5" width="15" height="34" fill="#c5c7cb" />
        <path d="M18 8q-7 14 0 29M6 31l13-7" fill="none" stroke="#2c3433" strokeWidth="1.700" />
        <path d="M22 12h6M25 8.500v7M25 30v7" stroke="#1f3a2a" strokeWidth="1.600" />
        <circle cx="34" cy="12" r="2.700" fill="#7fa189" stroke="#183221" strokeWidth="1.600" />
        <circle cx="34" cy="33.500" r="2.700" fill="#7fa189" stroke="#183221" strokeWidth="1.600" />
      </g>
      <Txt mono x={1236} y={325.500} w={36}>XMM1</Txt>
      <Txt mono x={1020.500} y={465} w={36}>XMM2</Txt>
      <Txt mono x={1149} y={592} w={36}>XMM3</Txt>
      <Txt mono x={1291.500} y={465} w={36}>XMM4</Txt>
      <Txt x={1129} y={525} w={19}>R1</Txt>
      <Txt x={1120} y={559} w={35}>100Ω</Txt>
      <Txt x={1225} y={427} w={19}>R2</Txt>
      <Txt x={1225} y={447} w={35}>200Ω</Txt>
      <Txt x={1225} y={682} w={19}>R3</Txt>
      <Txt x={1225} y={703} w={27}>50Ω</Txt>
      <Txt x={1389} y={525} w={20}>R4</Txt>
      <Txt x={1379} y={559} w={36}>470Ω</Txt>
      <Txt x={909.500} y={647} w={18}>E1</Txt>
      <Txt x={909.500} y={667} w={26}>12V</Txt>
      {!thin && (
        <g stroke="#222" strokeWidth="1.300" fill="none">
          <path d="M933 759v3M933 771.500v3M925 765.500h3.500M938 765.500h3.500" strokeWidth="1.800" />
          <path d="M930.500 760.500l2.500-3 2.500 3zM927 763l-3 2.500 3 2.500zM939 763l3 2.500-3 2.500z" fill="#222" strokeWidth=".6" />
          <path d="M933.500 767v14l3-2.500 3 6 2.500-1-2.500-6h4z" fill="#fff" />
        </g>
      )}
    </svg>
  );
}

/* ---------- slide thumbnails ---------- */
function ThumbLaw() {
  const lines: [string, number, number, number][] = [
    ["IT STATES THAT :", 584, 211, 45],
    ["“At any node (junction) in", 608, 219.500, 60],
    ["an", 599, 227, 6],
    [", the sum", 645, 227, 22],
    ["of", 590, 234, 5],
    [" flowing into that node is", 617, 234, 59],
    ["equal to the sum of currents flowing out", 585, 241, 96],
    ["of that node, or The algebraic sum of", 588, 248, 90],
    ["currents in a network of conductors", 590, 255, 86],
    ["meeting at a point is zero.”", 601, 262, 64],
  ];
  return (
    <svg width="137" height="103" viewBox="568 180 137 103" className="block" fontFamily="Liberation Sans, sans-serif" fontSize="6.400">
      <text x="593" y="196" fontSize="7.500" textLength="91" fill="#111" lengthAdjust="spacingAndGlyphs" fontFamily="DejaVu Sans, sans-serif">Kirchhoffs current law- KCL</text>
      <g fill="#e08a4c" textDecoration="underline">
        <text x="607" y="227" textLength="38" lengthAdjust="spacingAndGlyphs">electrical circuit</text>
        <text x="597" y="234" textLength="19" lengthAdjust="spacingAndGlyphs">current</text>
      </g>
      {lines.map(([t, x, y, w]) => (
        <text key={t} x={x} y={y} textLength={w} lengthAdjust="spacingAndGlyphs" fill="#3b3b3b">{t}</text>
      ))}
    </svg>
  );
}

function ThumbRule() {
  return (
    <svg width="137" height="103" viewBox="568 296 137 103" className="block" fontFamily="Liberation Sans, sans-serif" fontSize="4.400" fill="#666">
      <text x="585" y="317.500" textLength="70" lengthAdjust="spacingAndGlyphs">The algebraic sum of the currents into any</text>
      <text x="656" y="317.500" textLength="13" lengthAdjust="spacingAndGlyphs" fill="#b9b43c">junction</text>
      <text x="670" y="317.500" textLength="12" lengthAdjust="spacingAndGlyphs">is zero</text>
      <text x="622" y="325.500" textLength="40" lengthAdjust="spacingAndGlyphs" fill="#d8a48a">Σ I = 0 at the junction</text>
      <text x="624" y="331.500" textLength="46" lengthAdjust="spacingAndGlyphs" fill="#cf9a6c">+ for current toward</text>
      <text x="624" y="337" textLength="46" lengthAdjust="spacingAndGlyphs" fill="#cf9a6c">− for current away from</text>
      <text x="588" y="345" textLength="51" lengthAdjust="spacingAndGlyphs">(a) Kirchhoff’s current rule</text>
      <text x="610" y="351" textLength="16" lengthAdjust="spacingAndGlyphs">Junction</text>
      <path d="M591 353.500h54M618.500 353.500V379" stroke="#777" strokeWidth="1.200" />
      <circle cx="618.500" cy="353.500" r="1.500" fill="#333" />
      <path d="M591 382.500h57M648 342v42" stroke="#8a8a8e" strokeWidth="2.200" />
      <path d="M605 357.500h7M625 357.500h7M622.500 367v6" stroke="#555" />
      <text x="599" y="359">I</text><text x="635" y="359">I₂</text><text x="626" y="373">I₁ + I₂</text>
      <rect x="664" y="356" width="20" height="10" fill="none" stroke="#ccd0e2" strokeDasharray="2 2" />
    </svg>
  );
}

function ThumbTable() {
  return (
    <svg width="137" height="103" viewBox="568 528 137 103" className="block" fontFamily="Liberation Sans, sans-serif" fontSize="4" fill="#333">
      <text x="603" y="559" textLength="24" lengthAdjust="spacingAndGlyphs" fontWeight="bold">OBSERVATIONS</text>
      <path d="M608.500 563.500h50v26h-50zM608.500 569h50M608.500 574h50M608.500 579h50M608.500 584h50M621.500 563.500v26" fill="none" stroke="#8188a0" strokeWidth=".8" />
      <text x="623" y="568" textLength="20" lengthAdjust="spacingAndGlyphs" fontWeight="bold">CURRENT (mA)</text>
      {["I1", "I2", "I3", "I4"].map((t, i) => <text key={t} x="611" y={573 + i * 5} fontWeight="bold">{t}</text>)}
      <text x="610" y="610" textLength="43" fontSize="4.500" fill="#404670">I₁ + I₂ + I₃ + I₄</text>
      <path d="M640 615l6-5 5 5M646 612l5-4 4 4M656 605l3 1 4-2" fill="none" stroke="#777d9a" strokeWidth=".8" />
    </svg>
  );
}

function SlidesPane() {
  const thumbs = [<ThumbLaw key="1" />, <ThumbRule key="2" />, <Circuit key="3" width={137} height={103} thin />, <ThumbTable key="4" />];
  return (
    <div className="flex h-[865px] w-[170px] shrink-0 flex-col border-l-2 border-[#6f96d2] bg-gradient-to-b from-[#9ab8e6] via-[#678fc9] to-[#6089c9]">
      <div className="relative h-[21px] shrink-0 border-b border-[#6c8fc8] bg-gradient-to-b from-[#a3c3f0] to-[#86aae0]">
        <svg width="168" height="21" viewBox="0 0 168 21" className="absolute left-0 top-0">
          <path d="M56 21L48 1h50c6 0 12 8 18 20z" fill="#a9c8f3" stroke="#6c8fc8" />
          <path d="M0 21V0h44c6 0 10 10 18 21z" fill="#c9dffb" stroke="#6c8fc8" />
        </svg>
        <div className="relative flex h-[19px] items-center">
          <Label w={34} className="ml-[7px] text-[13px] font-semibold text-[#33487c]">Slides</Label>
          <Label w={41} className="ml-[27px] text-[13px] text-[#42598f]">Outline</Label>
          <svg width="7" height="7" viewBox="0 0 7 7" className="ml-[45px]"><path d="M.5.5l6 6M6.500.5l-6 6" stroke="#5b6f95" strokeWidth="1.600" /></svg>
        </div>
      </div>
      <div className="flex flex-col gap-[4px] pl-[2px] pt-[5px]">
        {thumbs.map((t, i) => (
          <div key={i} className={i === 2 ? "flex h-[112px] w-[162px] rounded-[2px] border-2 border-[#b98447] bg-gradient-to-r from-[#e5862b] to-[#cf8c48] pl-[2px] pt-[2px]" : "flex h-[112px] w-[162px] pl-[4px] pt-[4px]"}>
            <div className="w-[17px] pt-[3px] text-[13px] font-bold leading-[16px] text-white [text-shadow:1px_1px_1px_#405a88]">{i + 1}</div>
            <div className="h-[103px] w-[137px] bg-white shadow-[1px_1px_2px_#3b5580]">{t}</div>
          </div>
        ))}
      </div>
    </div>
  );
}

/* ---------- editing area ---------- */
function Workspace() {
  return (
    <div className="flex h-[865px] flex-1 flex-col border-l-[6px] border-[#aecbf6]">
      <div className="flex h-[813px] shrink-0">
        <div className="relative w-[900px] shrink-0 overflow-hidden bg-[linear-gradient(#a2c0ee_0%,#8fb0e2_17%,#7e9dd7_40%,#7794cd_60%,#5b84be_86%,#5b85bc_94%,#628ccd_100%)]">
          <svg width="900" height="813" viewBox="0 0 900 813" className="absolute left-0 top-0">
            <defs>
              <linearGradient id="sw" x1="0" x2="1"><stop offset="0" stopColor="#6e96d6" /><stop offset=".6" stopColor="#7ea4de" /><stop offset="1" stopColor="#9dbcec" stopOpacity="0" /></linearGradient>
            </defs>
            <path d="M0 0H340C220 12 90 30 0 60z" fill="url(#sw)" opacity=".7" />
          </svg>
          <div className="relative ml-[17px] mt-[82px] h-[648px] w-[865px] bg-white shadow-[3px_3px_5px_#2f4d7c]">
            <Circuit width={865} height={648} />
          </div>
        </div>
        <div className="flex w-[16px] flex-col border-l border-[#a9c8f4] bg-[#b2cff8]">
          <div className="flex h-[762px] flex-col items-center bg-[#7497cb]">
            <div className="mt-[6px]"><Caret className="rotate-180 text-[#46649c]" /></div>
            <div className="mt-[348px] flex h-[181px] w-[15px] flex-col items-center justify-center gap-[1px] border border-[#7a8fc0] bg-gradient-to-r from-[#dfeafa] to-[#bacff0]">
              <div className="h-px w-[8px] bg-[#7b90b8]" /><div className="h-px w-[8px] bg-[#7b90b8]" /><div className="h-px w-[8px] bg-[#7b90b8]" /><div className="h-px w-[8px] bg-[#7b90b8]" />
            </div>
            <div className="mt-auto pb-[8px]"><Caret className="text-[#3d5788]" /></div>
          </div>
          <svg width="15" height="50" viewBox="0 0 15 50" fill="#1b2b4b">
            <path d="M7.500 5l4 4.500h-8zM7.500 10l4 4.500h-8zM7.500 26.500l4-4.500h-8zM7.500 31.500l4-4.500h-8z" />
          </svg>
        </div>
      </div>
      <div className="h-[6px] shrink-0 border-b border-[#7595cc] bg-[#b3cffa]" />
      <div className="flex h-[45px] shrink-0">
        <div className="flex w-[900px] items-start bg-white pl-[11px] pt-[6px]">
          <Label w={132} className="text-[16px] leading-[20px] text-[#333]">Click to add notes</Label>
        </div>
        <div className="flex w-[16px] flex-col items-center justify-between bg-[#86a7da] py-[7px]">
          <Caret className="rotate-180 text-[#6483b8]" /><Caret className="text-[#6483b8]" />
        </div>
      </div>
    </div>
  );
}

function StatusBar() {
  return (
    <div className="flex h-[23px] shrink-0 items-center border-t border-[#6688bd] bg-gradient-to-b from-[#d6e6fb] via-[#bfd7f7] to-[#d0e1f8] text-[#40557f]">
      <div className="flex h-full w-[77px] items-center border-r border-[#93aed8] pl-[8px]"><Label w={60} className="text-[12px]">Slide 3 of 4</Label></div>
      <div className="flex h-full w-[99px] items-center border-r border-[#93aed8] pl-[11px]"><Label w={79} className="text-[12px]">"Office Theme"</Label></div>
      <div className="flex h-full w-[35px] items-center justify-center border-r border-[#93aed8]">
        <svg width="19" height="17" viewBox="0 0 19 17"><path d="M1 9l7-3 9 4-7 5z" fill="#fff" stroke="#5e74a3" /><path d="M1 10v2l9 4 7-4v-2" fill="#c7d4ec" stroke="#5e74a3" /><path d="M8 1l8 8M16 1L8 9" stroke="#e8432e" strokeWidth="2.200" /></svg>
      </div>
      <div className="flex-1" />
      <div className="flex h-full w-[279px] items-center border-l border-[#6f90c6] bg-gradient-to-b from-[#a9c7f3] to-[#7c9fd8] pl-[6px]">
        <div className="flex h-[18px] w-[59px] items-center justify-around border border-[#6983b3] bg-[#d2e2f8]">
          <svg width="13" height="11" viewBox="0 0 13 11" fill="none" stroke="#5a6779"><path d="M.5.5h12v10H.5zM4.500.5v10M6.500 3h4v3h-4zM5 8.500h7" /></svg>
          <svg width="12" height="11" viewBox="0 0 12 11" fill="none" stroke="#5a6779"><path d="M.5.5h4v3.500h-4zM7 .5h4v3.500H7zM.5 6.500h4V10h-4zM7 6.500h4V10H7z" /></svg>
          <svg width="13" height="11" viewBox="0 0 13 11" fill="none" stroke="#5a6779"><path d="M0 1h13M1.500 1v5h10V1M6.500 6v4M3 10.500h7" strokeWidth="1.500" /></svg>
        </div>
        <Label w={22} className="ml-[8px] text-[12px] text-[#4a649b]">85%</Label>
        <svg width="180" height="20" viewBox="1455 1016 180 20" className="ml-[3px]" fill="none">
          <path d="M1480 1025.500h105" stroke="#5b7cb7" /><path d="M1480 1026.500h105" stroke="#a9c5f0" /><path d="M1534 1022v7" stroke="#5b7cb7" />
          <circle cx="1471" cy="1026" r="7.500" fill="#dde8f8" stroke="#5c74a3" /><path d="M1467 1026h8" stroke="#445a86" strokeWidth="2" />
          <circle cx="1595" cy="1026" r="7.500" fill="#dde8f8" stroke="#5c74a3" /><path d="M1591 1026h8M1595 1022v8" stroke="#445a86" strokeWidth="2" />
          <path d="M1520 1019.500h9v7l-4.500 4.500-4.500-4.500z" fill="#d7e5fa" stroke="#4c6aa3" />
          <rect x="1612.500" y="1018.500" width="15" height="15" rx="2" fill="#eff4fb" stroke="#8fa3c7" />
          <path d="M1620 1020v4M1620 1028v4M1614 1026h4M1622 1026h4M1615 1021l2 2M1625 1021l-2 2M1615 1031l2-2M1625 1031l-2-2" stroke="#4a5c80" strokeWidth="1.300" />
        </svg>
      </div>
    </div>
  );
}

function Taskbar() {
  const active = "flex h-[41px] items-center justify-center rounded-[3px] border border-[#4a5a72] bg-gradient-to-b from-[#dce7f3] to-[#b9c8da] shadow-[inset_0_0_0_1px_#eef4fa]";
  return (
    <div className="flex h-[42px] shrink-0 items-center border-t border-[#48597a] bg-gradient-to-r from-[#9fb1c6] via-[#a8bfdd] to-[#a9c0df]">
      <div className="flex w-[57px] justify-center">
        <svg width="40" height="40" viewBox="0 0 40 40">
          <defs><radialGradient id="start" cx=".5" cy=".9" r=".9"><stop offset="0" stopColor="#5fc4ee" /><stop offset=".6" stopColor="#255a94" /><stop offset="1" stopColor="#9fb9d2" /></radialGradient></defs>
          <circle cx="20" cy="20" r="18.500" fill="url(#start)" stroke="#3b5573" />
          <path d="M11 13q4-4 9-1l-2 8q-4-3-9 0z" fill="#ee6a3a" /><path d="M21.500 12.500q4 3 9 1l-2 8q-5 2-9-1z" fill="#8fc652" />
          <path d="M8.500 21.500q4-3 9 0l-2 7q-4-3-9 0z" fill="#58aee8" /><path d="M19 22q4 3 9 1l-2 7.500q-5 2-9-1z" fill="#f9cf4d" />
        </svg>
      </div>
      <div className="flex w-[74px] justify-center">
        <svg width="34" height="34" viewBox="0 0 34 34" fill="none">
          <circle cx="18" cy="18" r="10" stroke="#2369bd" strokeWidth="6" /><path d="M11 18.500h19" stroke="#2369bd" strokeWidth="4.500" /><path d="M21 23h12" stroke="#a4b7cd" strokeWidth="3.500" />
          <path d="M3 32C-1 24 14 5 30 2M3 32c3 1 6-1 8-3" stroke="#f2c02e" strokeWidth="2.800" />
        </svg>
      </div>
      <div className="flex w-[58px] justify-center">
        <svg width="36" height="32" viewBox="0 0 36 32">
          <path d="M2 4l2-3h10l2 2h17v24H2z" fill="#f0d98a" stroke="#caa84f" /><path d="M7 2h4M17 4h4M25 4h4" stroke="#d1502f" strokeWidth="2" /><path d="M2 9h31v18H2z" fill="#f9eaaa" />
          <path d="M7 31V19q0-2 2-2h17q2 0 2 2v12h-5v-7H12v7z" fill="#9dd3ee" stroke="#5b9ec7" />
        </svg>
      </div>
      <div className="flex w-[68px] justify-center">
        <svg width="30" height="28" viewBox="0 0 30 28">
          <path d="M8 1h19v24H8z" fill="#76aede" stroke="#4d86bb" /><path d="M2 3h20v23H2z" fill="#9dcbee" stroke="#5b93c5" />
          <circle cx="12.500" cy="14.500" r="9" fill="#ef8423" /><path d="M9.500 9.500v10l8.500-5z" fill="#fff" />
        </svg>
      </div>
      <div className={`${active} ml-[2px] w-[57px]`}>
        <svg width="32" height="32" viewBox="-16 -16 32 32" className="mr-[1px]">
          <path d="M0 0L-13.400 -7.750A15.500 15.500 0 0113.400 -7.750L0 -7z" fill="#dd4a3a" />
          <path d="M-13.400 -7.750A15.500 15.500 0 000 15.500L6 3.500L0 0z" fill="#2f9a54" />
          <path d="M13.400 -7.750A15.500 15.500 0 01-.2 15.500L6.200 3.500L0 -7.200z" fill="#f8cb3a" />
          <path d="M-13.400 -7.750L-6.200 4L0 -7.200z" fill="#dd4a3a" />
          <circle r="7.200" fill="#f2f5f8" /><circle r="5.700" fill="#4285e8" />
        </svg>
      </div>
      <div className="h-[41px] w-[5px] rounded-r-[3px] border-r border-[#4a5a72] bg-[#b9c8da]" />
      <div className="flex w-[66px] justify-center">
        <svg width="34" height="34" viewBox="0 0 34 34"><circle cx="17" cy="17" r="15.500" fill="#9f8dcc" stroke="#aaa0cf" /><path d="M11 5h8q0 14-7 23H4q7-10 7-23z" fill="#ee5f7a" stroke="#c04c79" strokeWidth=".8" /><path d="M21 4h9q0 15-7 24h-8q6-10 6-24z" fill="#ee5f7a" stroke="#c04c79" strokeWidth=".8" /></svg>
      </div>
      <div className={`${active} ml-[2px] w-[63px]`}>
        <svg width="32" height="30" viewBox="0 0 32 30" className="mr-[1px]"><rect width="31" height="30" fill="#c81713" /><path d="M15 5c-3 0 0 8 3 11 4 4 9 4 9 2 0-3-12-1-18 3-5 3-4 5-2 4 4-2 9-12 9-17 0-2-.5-3-1-3z" fill="none" stroke="#fff" strokeWidth="1.600" /></svg>
      </div>
      <div className={`${active} ml-[4px] w-[62px]`}>
        <svg width="36" height="34" viewBox="0 0 36 34" className="mr-[4px]">
          <path d="M2 28V10q0-8 8-8h20v6" fill="#f8d5c1" stroke="#e0683a" strokeWidth="1.500" />
          <path d="M6 28V12q0-4 4-4h18" fill="none" stroke="#e98a60" /><path d="M2 28h6" stroke="#e0683a" strokeWidth="1.500" />
          <path d="M8 8h26l-2 24-25-2z" fill="#fdf6f1" stroke="#e5b69d" /><path d="M10.500 12h20.500l-1 15-19.500-1z" fill="#dd5a24" />
          <path d="M12 15.500h6M12 19h6M12 22.500h6" stroke="#fff" strokeWidth="1.600" /><path d="M24.500 15.500a4 4 0 104 4h-4z" fill="#fff" />
        </svg>
      </div>
      <div className="flex-1" />
      <div className="flex h-[41px] w-[204px] items-center bg-gradient-to-r from-[#a5bbd8] via-[#8296b0] via-20% to-[#7d8ea5]">
        <svg width="10" height="6" viewBox="0 0 10 6" className="ml-[41px]"><path d="M0 5.500h10L5 .5z" fill="#eef3f9" /></svg>
        <svg width="18" height="18" viewBox="0 0 18 18" className="ml-[12px]" fill="none" stroke="#f2f6fb"><path d="M1 6h3l4-4v14l-4-4H1z" fill="#f2f6fb" /><path d="M10.500 6q2 3 0 6M13 4.500q3 4.500 0 9M15.500 3q4 6 0 12" /></svg>
        <svg width="18" height="18" viewBox="0 0 18 18" className="ml-[8px]" fill="none" stroke="#eef3f9" strokeWidth="1.500"><path d="M7 4h10v9H5M1 1v4h4V1M3 5v9h2M8 16h7M11 13v3" /></svg>
        <div className="ml-[16px] flex w-[56px] flex-col items-center gap-[4px] pt-[1px] text-[12.500px] text-[#f0f4fa]">
          <Label w={45}>2:06 PM</Label>
          <Label w={55}>7/27/2020</Label>
        </div>
        <div className="ml-auto h-[41px] w-[16px] border border-[#5c6b82] bg-gradient-to-b from-[#5e6c82] to-[#8d9caf] shadow-[inset_0_0_0_1px_#a4b2c4]" />
      </div>
    </div>
  );
}

export default function App() {
  return (
    <div className={`h-[1080px] w-[1920px] overflow-hidden bg-black ${UI}`}>
      <div className="relative ml-[285px] flex h-[1080px] w-[1350px] flex-col bg-[#aecbf6]">
        <TitleArea />
        <Ribbon />
        <div className="h-[2px] shrink-0 bg-[#8fb4dd]" />
        <main className="flex h-[865px] shrink-0 bg-[#8eb0e2]">
          <RecoveryPane />
          <SlidesPane />
          <Workspace />
        </main>
        <StatusBar />
        <Taskbar />
        <div className="absolute left-[457px] top-[983px] flex h-[46px] w-[437px] items-center border border-[#c3c3c7] bg-white shadow-[0_1px_2px_#8a93a3]">
          <div className="ml-[11px] flex gap-[3px]"><div className="h-[12px] w-[2px] bg-[#dcd3d6]" /><div className="h-[12px] w-[2px] bg-[#dcd3d6]" /></div>
          <Label w={243} className="ml-[9px] text-[13px] text-[#606266]">teams.microsoft.com is sharing your screen.</Label>
          <div className="ml-[11px] flex h-[34px] w-[107px] items-center justify-center rounded-[3px] bg-[#1c74e9]"><Label w={73} className="text-[13px] font-semibold text-[#e6effc]">Stop sharing</Label></div>
          <Label w={26} className="ml-[10px] text-[13px] text-[#6b9ae0]">Hide</Label>
        </div>
      </div>
    </div>
  );
}
